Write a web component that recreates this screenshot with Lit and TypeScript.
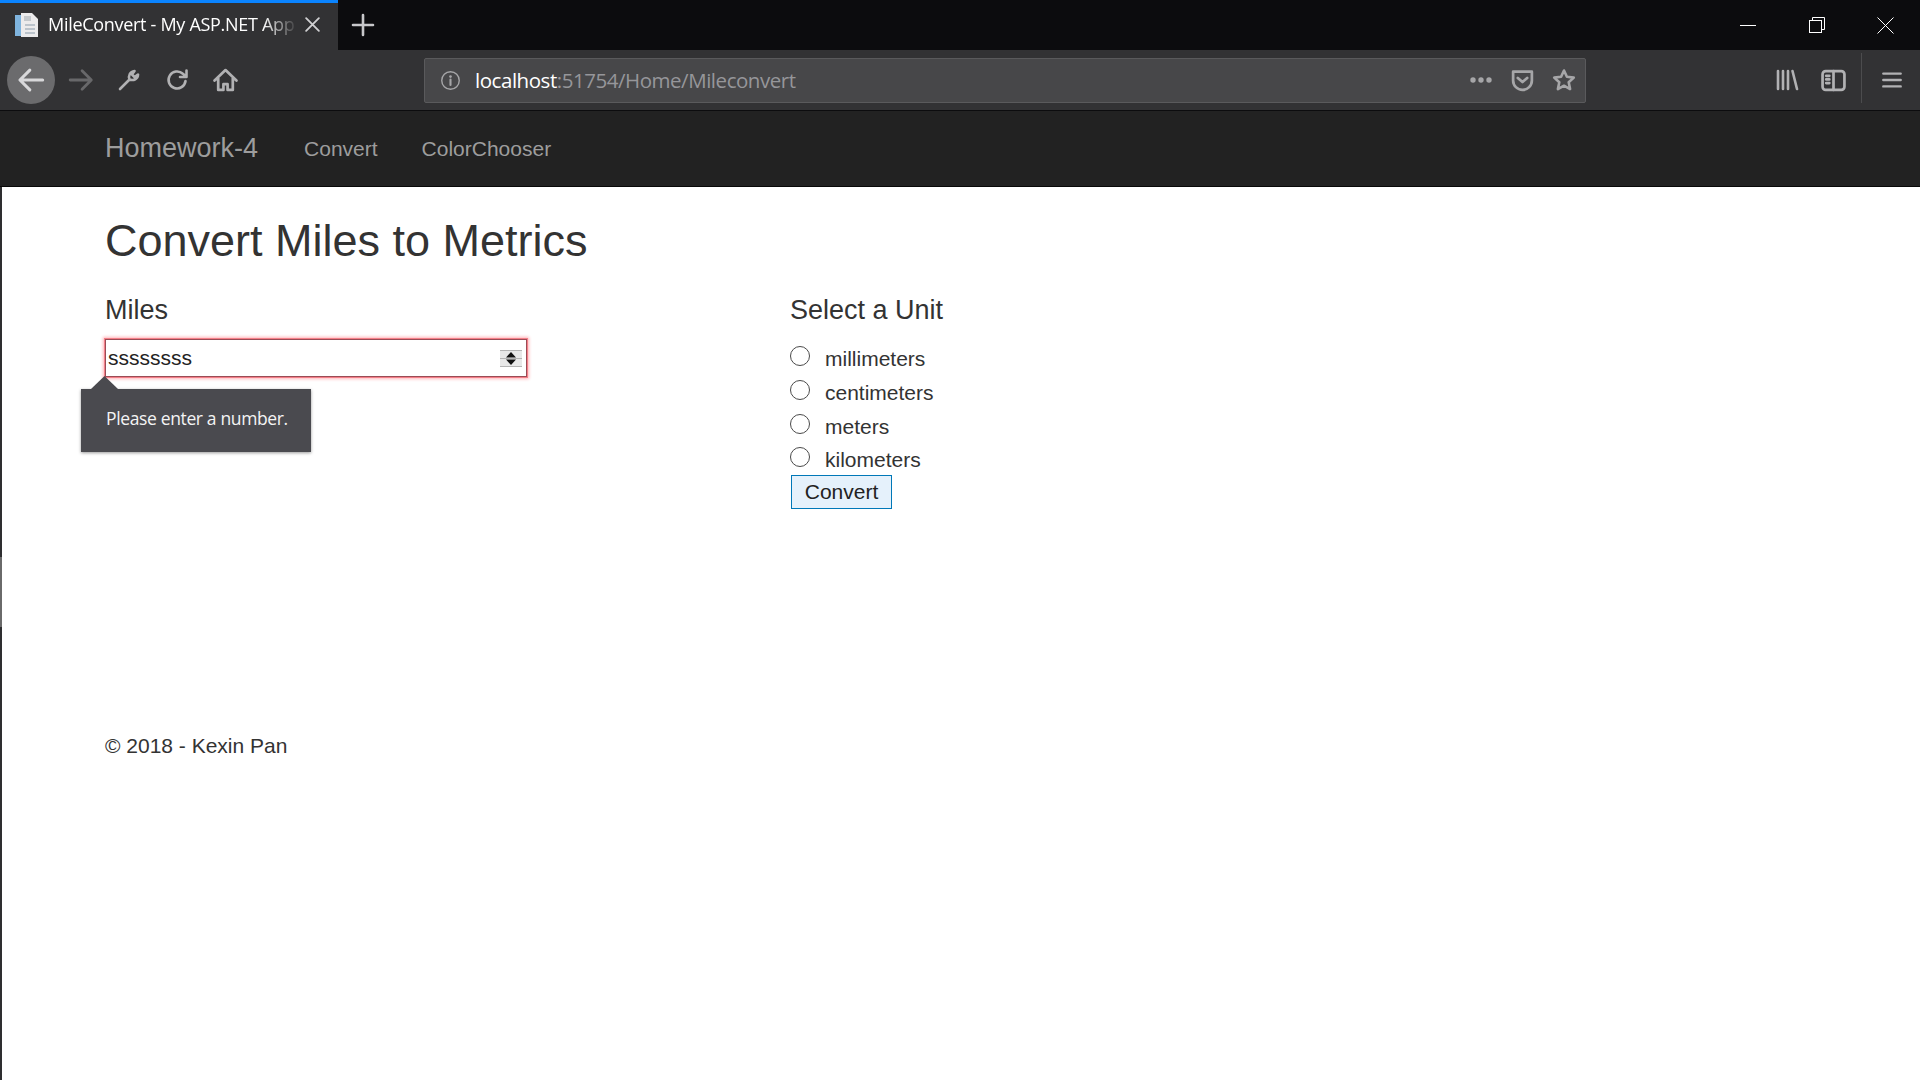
import { LitElement, css, html, svg } from "lit";
import { customElement } from "lit/decorators.js";

const icon = (size: number, body: unknown, width = 2.6) => html`<svg width=${size} height=${size} viewBox="0 0 24 24" fill="none" stroke="currentColor" stroke-width=${width} stroke-linecap="round" stroke-linejoin="round">${body}</svg>`;

const icons = {
  back: svg`<path d="M22 12H3M11 3.500 2.500 12l8.500 8.500"/>`,
  forward: svg`<path d="M2 12h19M13 3.500 21.500 12 13 20.500"/>`,
  wrench: svg`<path d="M3 21 12.500 11.500M12.500 11.500c-1.500-3.500.5-8 5-8.500l-2.500 3.500 2.500 2.500 3.500-2.500c0 4.500-4.500 6.500-8.500 5Z"/>`,
  reload: svg`<path d="M20.500 13a8.500 8.500 0 1 1-2.600-7.200L21 8.500M21.500 2.500v6.500H15"/>`,
  home: svg`<path d="M1.500 12 12 2l10.500 10M5 9.500V21h5v-5.500h4V21h5V9.500"/>`,
  dots: svg`<g fill="currentColor" stroke="none"><circle cx="4" cy="12" r="2.700"/><circle cx="12" cy="12" r="2.700"/><circle cx="20" cy="12" r="2.700"/></g>`,
  pocket: svg`<path d="M3 3.500h18v8.500a9 9 0 0 1-18 0ZM7.500 9.500 12 13.500l4.500-4"/>`,
  star: svg`<path d="m12 2.500 2.900 6.300 6.900.8-5.100 4.700 1.400 6.800-6.100-3.400-6.100 3.400 1.400-6.800-5.100-4.700 6.900-.8Z"/>`,
  library: svg`<path d="M3 3v18M8 3v18M13 3v18M17.500 3 22 21"/>`,
  sidebar: svg`<rect x="1.500" y="3" width="21" height="18" rx="3"/><path d="M12 3v18M5 7.500h3M5 11h3M5 14.500h3"/>`,
  menu: svg`<path d="M2.500 5h19M2.500 12h19M2.500 19h19"/>`,
  info: svg`<circle cx="12" cy="12" r="10" stroke-width="1.600"/><path d="M12 11v6" stroke-width="2.400"/><circle cx="12" cy="7.500" r="1.500" fill="currentColor" stroke="none"/>`
};

@customElement("app-root")
export class AppRoot extends LitElement {
  static styles = css`
    :host {
      display: block;
      height: 1080px;
      overflow: hidden;
      background: #fff;
      font-family: "Liberation Sans", Arial, sans-serif;
      color: #333;
    }

    .tabbar {
      display: flex;
      align-items: stretch;
      height: 50px;
      background: #0c0c0e;
      color: #fff;
    }

    .tab {
      display: flex;
      align-items: center;
      width: 338px;
      box-sizing: border-box;
      padding: 0 0 4px 15px;
      border-top: 3px solid #0a84ff;
      background: #323234;
      font: 18px/1.3 "Open Sans", sans-serif;
      letter-spacing: -0.3px;
    }

    .tab-title {
      width: 250px;
      margin-left: 9px;
      white-space: nowrap;
      -webkit-mask-image: linear-gradient(90deg, #000 86%, transparent 100%);
      mask-image: linear-gradient(90deg, #000 86%, transparent 100%);
    }

    .tab-close {
      display: flex;
      margin-left: 6px;
      color: #d0d0d2;
    }

    .new-tab {
      display: flex;
      align-items: center;
      justify-content: center;
      width: 50px;
      padding-bottom: 1px;
      color: #c8c8ca;
    }

    .window {
      display: flex;
      margin-left: auto;
    }

    .window span {
      display: flex;
      align-items: center;
      justify-content: center;
      width: 69px;
    }

    .toolbar {
      display: flex;
      align-items: center;
      height: 61px;
      box-sizing: border-box;
      padding-left: 7px;
      background: #323234;
      border-bottom: 1px solid #0c0c0e;
      color: #b1b1b3;
    }

    .tool {
      display: flex;
      align-items: center;
      justify-content: center;
      flex: none;
      width: 48px;
      height: 48px;
    }

    .tool.active {
      border-radius: 50%;
      background: #6b6b6d;
      color: #d8d8da;
      margin-right: 2px;
    }

    .tool.dim {
      color: #68686a;
    }

    .urlbar {
      display: flex;
      align-items: center;
      flex: none;
      box-sizing: border-box;
      width: 1162px;
      height: 45px;
      margin-left: 175px;
      padding-left: 15px;
      background: #474749;
      border: 1px solid #5a5a5c;
      border-radius: 2px;
      font: 20.500px/1 "Open Sans", sans-serif;
      letter-spacing: -0.46px;
      color: #a6a6a8;
    }

    .url {
      margin-left: 14px;
      color: #96969a;
      white-space: nowrap;
    }

    .url b {
      font-weight: 400;
      color: #fff;
    }

    .url-actions {
      display: flex;
      align-items: center;
      gap: 17px;
      margin-left: auto;
      margin-right: 9px;
    }

    .toolbar .right {
      margin-left: 177px;
      display: flex;
      align-items: center;
      flex: none;
    }

    .toolbar .right .tool {
      width: 47px;
    }

    .divider {
      width: 1px;
      height: 50px;
      margin: 0 6px 4px 4px;
      background: #4c4c4e;
    }

    .navbar {
      display: flex;
      align-items: center;
      height: 76px;
      box-sizing: border-box;
      padding-left: 105px;
      background: #222;
      border-bottom: 1px solid #080808;
      color: #9d9d9d;
      font-size: 21px;
    }

    .brand {
      font-size: 27px;
      margin-right: 46px;
    }

    .nav-link {
      margin-right: 44px;
    }

    .page {
      position: relative;
      height: 893px;
      box-sizing: border-box;
      padding-left: 103px;
      border-left: 2px solid #2e2e30;
      font-size: 21px;
    }

    /* lighter stretch of the window edge */
    .page::before {
      content: "";
      position: absolute;
      left: -2px;
      top: 370px;
      width: 2px;
      height: 70px;
      background: #6a6a6a;
    }

    h1 {
      margin: 0;
      padding-top: 30px;
      font-size: 45px;
      font-weight: 400;
      line-height: 47px;
    }

    .form {
      display: grid;
      grid-template-columns: 685px auto;
      margin-top: 31px;
      height: 215px;
    }

    h4 {
      margin: 0 0 14px;
      font-size: 27px;
      font-weight: 400;
      line-height: 30px;
    }

    .field {
      position: relative;
    }

    .number {
      display: flex;
      align-items: center;
      box-sizing: border-box;
      width: 422px;
      height: 38px;
      padding: 0 4px 0 2px;
      border: 1px solid #9a4c55;
      box-shadow: 0 0 0 1px #f47f88, 0 0 3px 2px #ffb5ba;
      background: #fff;
    }

    .number input {
      flex: 1;
      min-width: 0;
      padding: 0;
      border: 0;
      outline: 0;
      background: none;
      font: 21px "Liberation Sans", Arial, sans-serif;
      color: #222;
    }

    .spin {
      display: block;
      flex: none;
    }

    .tooltip {
      position: absolute;
      left: -24px;
      top: 94px;
      box-sizing: border-box;
      width: 230px;
      height: 63px;
      padding-left: 25px;
      background: #4a4a4f;
      color: #f4f4f4;
      font: 17.500px/59px "Open Sans", sans-serif;
      letter-spacing: -0.36px;
      box-shadow: 0 1px 3px rgba(0, 0, 0, 0.4);
    }

    .tooltip::before {
      content: "";
      position: absolute;
      left: 10px;
      top: -13px;
      width: 27px;
      height: 13px;
      background: #4a4a4f;
      clip-path: polygon(0 100%, 50% 0, 100% 100%);
    }

    .radio {
      display: flex;
      align-items: center;
      height: 33.670px;
      box-sizing: border-box;
      padding-top: 5px;
      gap: 15px;
    }

    .radio input {
      appearance: none;
      flex: none;
      width: 20px;
      height: 20px;
      margin: -4px 0 0;
      border: 1px solid #4a4a4a;
      border-radius: 50%;
      background: #fff;
    }

    .radio span {
      line-height: 1;
      padding-top: 1px;
    }

    button {
      display: block;
      width: 101px;
      height: 34px;
      margin: 1px 0 0 1px;
      padding: 0;
      border: 1px solid #0078b8;
      background: #e5f1fb;
      color: #222;
      font: 21px "Liberation Sans", Arial, sans-serif;
    }

    footer {
      margin-top: 222px;
      line-height: 28px;
    }
  `;

  render() {
    return html`
      <div class="tabbar">
        <div class="tab">
          <svg width="24" height="24" viewBox="0 0 24 24">
            <rect x="0" y="2" width="8" height="21" fill="#7fb4de" />
            <path d="M6 0h11l6 6v18H6Z" fill="#ecebec" />
            <path d="M9 3h7v5H9Z" fill="#c4c8cc" />
            <path d="M10 12h10M10 16h10M10 20h10" stroke="#aab6c0" stroke-width="1.500" />
          </svg>
          <span class="tab-title">MileConvert - My ASP.NET App</span>
          <span class="tab-close">${icon(17, svg`<path d="M3 3l18 18M21 3 3 21"/>`)}</span>
        </div>
        <div class="new-tab">${icon(24, svg`<path d="M12 2v20M2 12h20"/>`)}</div>
        <div class="window">
          <span><svg width="16" height="16" viewBox="0 0 16 16"><path d="M0 8.500h16" stroke="#fff" /></svg></span>
          <span><svg width="16" height="16" viewBox="0 0 16 16" fill="none" stroke="#fff"><path d="M3.500 3.500v-3h12v12h-3" /><rect x="0.500" y="3.500" width="12" height="12" /></svg></span>
          <span><svg width="17" height="17" viewBox="0 0 17 17"><path d="M.5.500l16 16M16.500.500l-16 16" stroke="#fff" /></svg></span>
        </div>
      </div>
      <div class="toolbar">
        <span class="tool active">${icon(28, icons.back)}</span>
        <span class="tool dim">${icon(26, icons.forward)}</span>
        <span class="tool">${icon(24, icons.wrench)}</span>
        <span class="tool">${icon(24, icons.reload)}</span>
        <span class="tool">${icon(25, icons.home)}</span>
        <div class="urlbar">
          ${icon(21, icons.info)}
          <span class="url"><b>localhost</b>:51754/Home/Mileconvert</span>
          <span class="url-actions">
            ${icon(24, icons.dots)}
            ${icon(25, icons.pocket)}
            ${icon(24, icons.star)}
          </span>
        </div>
        <div class="right">
          <span class="tool">${icon(24, icons.library)}</span>
          <span class="tool">${icon(25, icons.sidebar)}</span>
          <span class="divider"></span>
          <span class="tool">${icon(22, icons.menu)}</span>
        </div>
      </div>
      <nav class="navbar">
        <span class="brand">Homework-4</span>
        <span class="nav-link">Convert</span>
        <span class="nav-link">ColorChooser</span>
      </nav>
      <main class="page">
        <h1>Convert Miles to Metrics</h1>
        <div class="form">
          <div class="field">
            <h4>Miles</h4>
            <div class="number">
              <input type="text" .value=${"ssssssss"} />
              <svg class="spin" width="22" height="17" viewBox="0 0 22 17">
                <path d="M0 0h22v17H0Z" fill="#e8e8e8" />
                <path d="M0 .5h22M0 8.500h22M0 16.500h22" stroke="#b4b4b4" />
                <path d="M11 2 16 7.500H6ZM11 15 16 9.500H6Z" fill="#111" />
              </svg>
            </div>
            <div class="tooltip">Please enter a number.</div>
          </div>
          <div>
            <h4>Select a Unit</h4>
            ${["millimeters", "centimeters", "meters", "kilometers"].map(
              (unit) => html`<label class="radio"><input type="radio" name="unit" /><span>${unit}</span></label>`
            )}
            <button>Convert</button>
          </div>
        </div>
        <footer>© 2018 - Kexin Pan</footer>
      </main>
    `;
  }
}
